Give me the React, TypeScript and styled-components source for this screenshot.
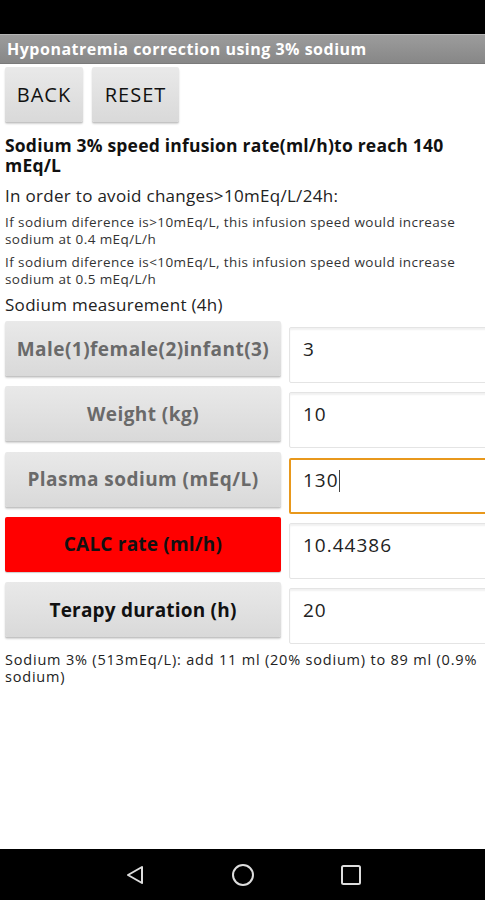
import React from "react";
import styled, { createGlobalStyle } from "styled-components";

const Global = createGlobalStyle`
  html, body { margin: 0; padding: 0; background: #fff; }
  body { font-family: "Open Sans", Roboto, "Liberation Sans", sans-serif; }
  * { box-sizing: border-box; }
`;

const Screen = styled.div`
  width: 485px;
  height: 900px;
  display: flex;
  flex-direction: column;
  background: #fff;
  overflow: hidden;
`;

const StatusBar = styled.div`
  height: 34px;
  background: #000;
  flex: none;
`;

const TitleBar = styled.div`
  height: 30px;
  flex: none;
  background: linear-gradient(#9c9c9c, #878787);
  border-top: 1px solid #b4b4b4;
  border-bottom: 1px solid #7a7a7a;
  color: #fff;
  font-weight: 700;
  font-size: 16px;
  letter-spacing: 0.5px;
  display: flex;
  align-items: center;
  padding-left: 7px;
  white-space: nowrap;
`;

const Content = styled.div`
  flex: 1;
  padding: 3px 0 0 5px;
  display: flex;
  flex-direction: column;
`;

const Toolbar = styled.div`
  display: flex;
  gap: 9px;
  height: 56px;
`;

const GrayButton = styled.button`
  font-family: inherit;
  background: linear-gradient(#e9e9e9, #d9d9d9);
  border: none;
  border-radius: 2px;
  box-shadow: 0 1px 0 #c4c4c4, 0 2px 2px rgba(0,0,0,0.18);
  color: #111;
  padding: 0;
`;

const NavButton = styled(GrayButton)<{ $w: number }>`
  width: ${(p) => p.$w}px;
  height: 55px;
  font-size: 20px;
  letter-spacing: 1px;
`;

const Heading = styled.div`
  margin-top: 12px;
  font-weight: 700;
  font-size: 17.5px;
  letter-spacing: 0.2px;
  line-height: 20px;
  color: #111;
  padding-right: 8px;
`;

const SubHeading = styled.div<{ $mt: number }>`
  margin-top: ${(p) => p.$mt}px;
  font-size: 17px;
  letter-spacing: 0.3px;
  line-height: 22px;
  color: #222;
`;

const Note = styled.div`
  margin-top: 7px;
  font-size: 13.5px;
  letter-spacing: 0.42px;
  line-height: 16.5px;
  color: #333;
  padding-right: 24px;
`;

const Rows = styled.div`
  margin-top: 5px;
  display: flex;
  flex-direction: column;
`;

const Row = styled.div`
  display: flex;
  gap: 8px;
  height: 65.25px;
  align-items: flex-start;
`;

const LabelButton = styled(GrayButton)<{ $kind: "disabled" | "active" | "calc" }>`
  flex: none;
  width: 276px;
  height: 55px;
  font-size: 19px;
  letter-spacing: ${(p) => (p.$kind === "disabled" ? "0.45px" : "0.2px")};
  font-weight: 700;
  white-space: nowrap;
  color: ${(p) => (p.$kind === "disabled" ? "#6a6a6a" : "#111")};
  ${(p) =>
    p.$kind === "calc"
      ? "background: #ff0000; box-shadow: 0 1px 1px rgba(0,0,0,0.2);"
      : ""}
`;

const Field = styled.div<{ $focused?: boolean }>`
  margin-top: 6px;
  flex: 1;
  height: 56px;
  margin-right: -6px;
  background: #fff;
  border: ${(p) => (p.$focused ? "2px solid #e8981c" : "1px solid #e4e4e4")};
  border-radius: 2px;
  box-shadow: ${(p) => (p.$focused ? "none" : "inset 0 2px 2px rgba(0,0,0,0.06)")};
  font-size: 19px;
  letter-spacing: 1px;
  color: #222;
  padding: ${(p) => (p.$focused ? "7px 0 0 12px" : "8px 0 0 13px")};
  display: flex;
  align-items: flex-start;
`;

const Caret = styled.span`
  display: inline-block;
  width: 1px;
  height: 22px;
  margin-top: 3px;
  background: #444;
`;

const Footer = styled.div`
  margin-top: 4px;
  font-size: 14.5px;
  letter-spacing: 0.8px;
  line-height: 17px;
  color: #222;
  padding-right: 4px;
`;

const SysNav = styled.div`
  height: 51px;
  flex: none;
  background: #000;
  display: flex;
  justify-content: center;
  align-items: center;
  gap: 85px;
`;

const rows: { label: string; value: string; kind: "disabled" | "active" | "calc"; focused?: boolean }[] = [
  { label: "Male(1)female(2)infant(3)", value: "3", kind: "disabled" },
  { label: "Weight (kg)", value: "10", kind: "disabled" },
  { label: "Plasma sodium (mEq/L)", value: "130", kind: "disabled", focused: true },
  { label: "CALC rate (ml/h)", value: "10.44386", kind: "calc" },
  { label: "Terapy duration (h)", value: "20", kind: "active" },
];

export default function App() {
  return (
    <Screen>
      <Global />
      <StatusBar />
      <TitleBar>Hyponatremia correction using 3% sodium</TitleBar>
      <Content>
        <Toolbar>
          <NavButton $w={78}>BACK</NavButton>
          <NavButton $w={87}>RESET</NavButton>
        </Toolbar>
        <Heading>Sodium 3% speed infusion rate(ml/h)to reach 140 mEq/L</Heading>
        <SubHeading $mt={10}>In order to avoid changes&gt;10mEq/L/24h:</SubHeading>
        <Note>If sodium diference is&gt;10mEq/L, this infusion speed would increase sodium at 0.4 mEq/L/h</Note>
        <Note>If sodium diference is&lt;10mEq/L, this infusion speed would increase sodium at 0.5 mEq/L/h</Note>
        <SubHeading $mt={7}>Sodium measurement (4h)</SubHeading>
        <Rows>
          {rows.map((r) => (
            <Row key={r.label}>
              <LabelButton $kind={r.kind}>{r.label}</LabelButton>
              <Field $focused={r.focused}>
                {r.value}
                {r.focused && <Caret />}
              </Field>
            </Row>
          ))}
        </Rows>
        <Footer>Sodium 3% (513mEq/L): add 11 ml (20% sodium) to 89 ml (0.9% sodium)</Footer>
      </Content>
      <SysNav>
        <svg width="22" height="22" viewBox="0 0 22 22" fill="none" stroke="#ddd" strokeWidth="2" strokeLinejoin="round">
          <path d="M18 3 L4 11 L18 19 Z" />
        </svg>
        <svg width="24" height="24" viewBox="0 0 24 24" fill="none" stroke="#ddd" strokeWidth="2">
          <circle cx="12" cy="12" r="10" />
        </svg>
        <svg width="22" height="22" viewBox="0 0 22 22" fill="none" stroke="#ddd" strokeWidth="2">
          <rect x="2" y="2" width="18" height="18" rx="1.5" />
        </svg>
      </SysNav>
    </Screen>
  );
}
